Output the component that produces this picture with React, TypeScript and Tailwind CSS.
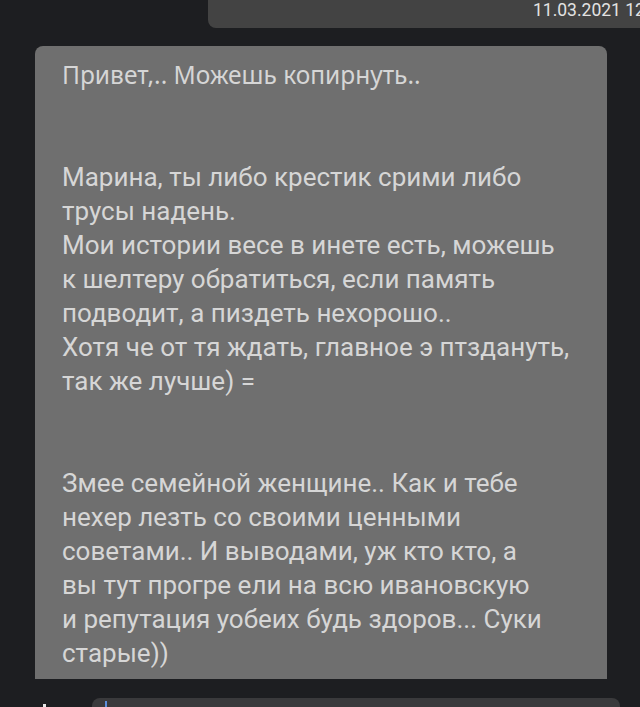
import React from 'react';

const lines = [
  'Марина, ты либо крестик срими либо',
  'трусы надень.',
  'Мои истории весе в инете есть, можешь',
  'к шелтеру обратиться, если память',
  'подводит, а пиздеть нехорошо..',
  'Хотя че от тя ждать, главное э птздануть,',
  'так же лучше) =',
  '',
  '',
  'Змее семейной женщине.. Как и тебе',
  'нехер лезть со своими ценными',
  'советами.. И выводами, уж кто кто, а',
  'вы тут прогре ели на всю ивановскую',
  'и репутация уобеих будь здоров... Суки',
  'старые))',
];

export default function App() {
  return (
    <div
      className="w-[640px] h-[707px] overflow-hidden bg-[#1d1e21]"
      style={{ fontFamily: 'Roboto, "Noto Sans", sans-serif' }}
    >
      {/* previous outgoing message, cut off at the top */}
      <div className="ml-[208px] h-[28px] bg-[#434343] rounded-bl-lg overflow-hidden whitespace-nowrap pl-[325px] text-[17.5px] leading-[20px] text-[#e2e2e2]">
        11.03.2021 12:40
      </div>

      {/* forwarded message bubble */}
      <div className="mt-[18px] ml-[35px] w-[572px] h-[633px] bg-[#6f6f6f] rounded-t-lg pl-[27px] pt-[12px] text-[26px] leading-[34px] text-[#d6d6d6]">
        <div
          className="h-[34px] whitespace-nowrap text-[24.5px]"
          style={{ fontFamily: '"Noto Sans", sans-serif' }}
        >
          Привет,.. Можешь копирнуть..
        </div>
        <div className="h-[68px]" />
        {lines.map((line, i) => (
          <div key={i} className="h-[34px] whitespace-nowrap">
            {line}
          </div>
        ))}
      </div>

      {/* message input */}
      <div className="mt-[19px] flex items-start">
        <div className="w-[92px] pl-[43px] pt-[6px]">
          <div className="w-[3px] h-[4px] bg-[#e6e6e6]" />
        </div>
        <div className="w-[528px] h-[40px] bg-[#3a3a3c] rounded-lg pl-[13px] pt-[3px]">
          <div className="w-[2px] h-[20px] bg-[#5d8fdc]" />
        </div>
      </div>
    </div>
  );
}
